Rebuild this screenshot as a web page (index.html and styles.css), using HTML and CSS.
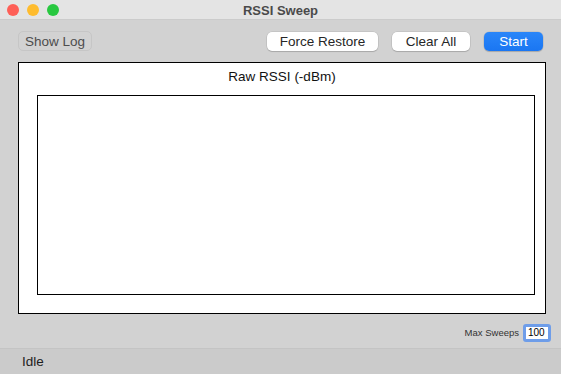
FILE: index.html
```html
<!DOCTYPE html>
<html lang="en">
<head>
    <meta charset="UTF-8">
    <title>RSSI Sweep</title>
    <link rel="stylesheet" href="styles.css">
</head>
<body>
    <div class="window">
        <!-- Title bar -->
        <div class="titlebar">
            <div class="lights">
                <span class="light red"></span>
                <span class="light yellow"></span>
                <span class="light green"></span>
            </div>
            <div class="title">RSSI Sweep</div>
        </div>

        <!-- Toolbar -->
        <div class="toolbar">
            <button class="btn ghost">Show Log</button>
            <div class="actions">
                <button class="btn restore">Force Restore</button>
                <button class="btn clear">Clear All</button>
                <button class="btn primary">Start</button>
            </div>
        </div>

        <!-- Chart -->
        <div class="chart">
            <div class="chart-title">Raw RSSI (-dBm)</div>
            <div class="plot"></div>
        </div>

        <!-- Sweep settings -->
        <div class="settings">
            <label for="maxSweeps">Max Sweeps</label>
            <input id="maxSweeps" class="num" type="text" value="100">
        </div>

        <!-- Status bar -->
        <div class="status">Idle</div>
    </div>
</body>
</html>
```

FILE: styles.css
```css
body {
    margin: 0;
    font-family: "Liberation Sans", Arial, sans-serif;
    background-color: #d2d2d2;
}

.window {
    width: 561px;
    height: 374px;
    display: flex;
    flex-direction: column;
    background-color: #d2d2d2;
    overflow: hidden;
}

.titlebar {
    height: 20px;
    position: relative;
    background-color: #e4e4e4;
    border-bottom: 1px solid #cbcbcb;
    box-sizing: border-box;
}
.lights {
    display: flex;
    gap: 8px;
    padding: 4px 0 0 7px;
}
.light {
    width: 12px;
    height: 12px;
    border-radius: 50%;
}
.red { background-color: #fe5f57; }
.yellow { background-color: #febc2e; }
.green { background-color: #28c840; }
.title {
    position: absolute;
    top: 3px;
    left: 0;
    right: 0;
    text-align: center;
    font-size: 13px;
    font-weight: bold;
    color: #4a4a4a;
}

.toolbar {
    display: flex;
    justify-content: space-between;
    align-items: center;
    padding: 11px 18px 0 18px;
    height: 20px;
}
.actions {
    display: flex;
    gap: 14px;
    padding-top: 1px;
}
.btn {
    font-family: "Liberation Sans", Arial, sans-serif;
    font-size: 13.5px;
    color: #262626;
    background-color: #ffffff;
    border: none;
    border-radius: 5px;
    height: 19px;
    padding: 0;
    white-space: nowrap;
    box-shadow: 0 0 0 0.5px rgba(0, 0, 0, 0.12), 0 1px 1px rgba(0, 0, 0, 0.15);
}
.btn.restore { width: 111px; }
.btn.clear { width: 78px; }
.btn.ghost {
    background-color: transparent;
    color: #4d4d4d;
    border: 1px solid #c6c6c6;
    box-shadow: none;
    height: 20px;
    width: 74px;
}
.btn.primary {
    background: linear-gradient(#2a86f9, #1a76f2);
    color: #ffffff;
    width: 59px;
}

.chart {
    margin: 11px 15px 0 18px;
    height: 252px;
    border: 1px solid #000;
    background-color: #ffffff;
    box-sizing: border-box;
    display: flex;
    flex-direction: column;
}
.chart-title {
    text-align: center;
    font-size: 13.5px;
    color: #111;
    padding-top: 6px;
    height: 26px;
    box-sizing: border-box;
}
.plot {
    margin: 6px 10px 0 18px;
    height: 200px;
    border: 1px solid #000;
    box-sizing: border-box;
}

.settings {
    display: flex;
    justify-content: flex-end;
    align-items: center;
    gap: 4px;
    padding: 9px 10px 0 0;
    height: 19px;
}
.settings label {
    font-size: 9.5px;
    color: #333;
}
.num {
    width: 28px;
    height: 18px;
    box-sizing: border-box;
    border: 3px solid #6e9de9;
    border-radius: 3px;
    font-family: "Liberation Sans", Arial, sans-serif;
    font-size: 10px;
    padding: 0 2px;
    color: #000;
    outline: none;
}

.status {
    margin-top: auto;
    height: 26px;
    box-sizing: border-box;
    border-top: 1px solid #c4c4c4;
    background-color: #cbcbcb;
    padding: 5px 0 0 22px;
    font-size: 13.5px;
    color: #1e1e1e;
}
```
